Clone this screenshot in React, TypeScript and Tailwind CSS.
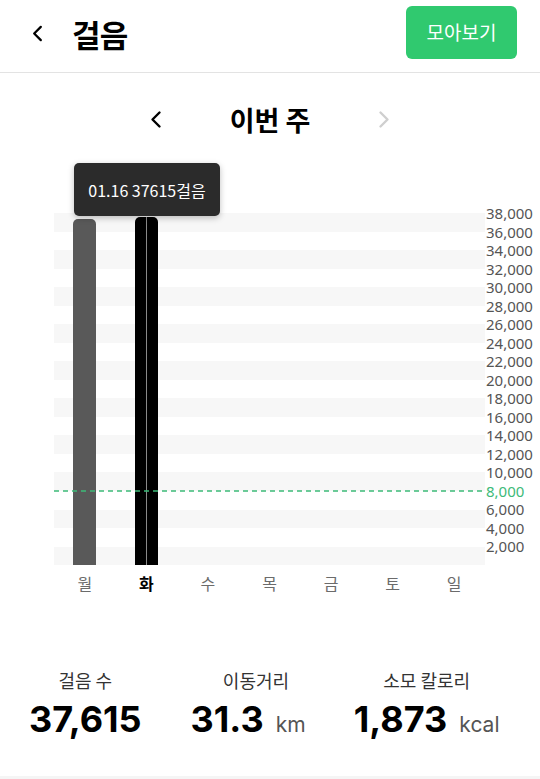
import React from 'react'

const KR = { fontFamily: '"Noto Sans CJK KR", "Noto Sans", sans-serif' }
const NUM = { fontFamily: 'Inter, "Noto Sans CJK KR", sans-serif' }

const MAX = 38000
const ticks = Array.from({ length: 19 }, (_, i) => MAX - i * 2000)
const days = [
  { d: '월', v: 37350 },
  { d: '화', v: 37615, active: true },
  { d: '수', v: 0 },
  { d: '목', v: 0 },
  { d: '금', v: 0 },
  { d: '토', v: 0 },
  { d: '일', v: 0 },
]
const GOAL = 8000

function Chevron ({ dir = 'left', className = '' }: { dir?: 'left' | 'right', className?: string }) {
  return (
    <svg viewBox="0 0 12 18" className={className} fill="none" stroke="currentColor" strokeWidth="2.4" strokeLinecap="round" strokeLinejoin="round">
      {dir === 'left' ? <path d="M9.5 2 L2.5 9 L9.5 16" /> : <path d="M2.5 2 L9.5 9 L2.5 16" />}
    </svg>
  )
}

export default function App () {
  return (
    <div className="w-[540px] h-[779px] bg-white flex flex-col text-black overflow-hidden" style={KR}>
      {/* header */}
      <header className="h-[73px] shrink-0 flex items-center justify-between border-b border-[#e3e3e3]">
        <div className="flex items-center pl-[31px] gap-[28px] mb-[6px]">
          <Chevron className="w-[13px] h-[17px] text-black" />
          <h1 className="text-[31px] font-bold leading-none tracking-tight">걸음</h1>
        </div>
        <button className="mr-[23px] mb-[7px] w-[111px] h-[53px] rounded-[6px] bg-[#30c96f] text-white text-[19px] flex items-center justify-center">
          모아보기
        </button>
      </header>

      {/* week nav */}
      <div className="h-[92px] shrink-0 flex items-center justify-center gap-[68px] pt-[1px]">
        <Chevron className="w-[12px] h-[19px] text-black" />
        <span className="text-[27px] font-bold leading-none">이번 주</span>
        <Chevron dir="right" className="w-[12px] h-[19px] text-[#cfcfcf]" />
      </div>

      {/* chart */}
      <div className="relative pt-[48px]">
        <div className="absolute left-[74px] top-[-2px] w-[146px] h-[53px] rounded-[5px] bg-[#2b2b2b] shadow-[0_2px_6px_rgba(0,0,0,0.25)] flex items-center justify-center text-white text-[16px] z-10">
          01.16 37615걸음
        </div>

        <div className="flex">
          <div className="ml-[54px] w-[431px]">
            <div className="relative h-[352px]">
              <div className="absolute inset-0 flex flex-col">
                {ticks.map((t, i) => (
                  <div key={t} className={i % 2 === 0 ? 'flex-1 bg-[#f7f7f7]' : 'flex-1'} />
                ))}
              </div>
              <div className="absolute inset-0 grid grid-cols-7 items-end">
                {days.map(x => (
                  <div key={x.d} className="flex justify-center h-full items-end">
                    {x.v > 0 && (
                      <div
                        className={x.active ? 'relative w-[23px] rounded-t-[5px] bg-black' : 'w-[23px] rounded-t-[5px] bg-[#595959]'}
                        style={{ height: `${(x.v / MAX) * 100}%` }}
                      >
                        {x.active && <div className="absolute left-[11px] top-0 bottom-0 w-px bg-[#8a8a8a]" />}
                      </div>
                    )}
                  </div>
                ))}
              </div>
              <svg className="absolute left-0 w-full h-[2px]" style={{ bottom: `calc(${(GOAL / MAX) * 100}% - 1px)` }} preserveAspectRatio="none">
                <line x1="0" y1="1" x2="100%" y2="1" stroke="#3dba78" strokeWidth="1.5" strokeDasharray="5 4" />
              </svg>
            </div>
            <div className="grid grid-cols-7 pt-[6px] text-[16px] leading-[24px] text-[#6b6b6b]">
              {days.map(x => (
                <span key={x.d} className={x.active ? 'text-center font-bold text-black' : 'text-center'}>{x.d}</span>
              ))}
            </div>
          </div>

          <div className="w-[55px] -mt-[9px] pl-[1px] flex flex-col text-[15px] text-[#555]" style={{ fontFamily: '"Noto Sans", sans-serif' }}>
            {ticks.map(t => (
              <span key={t} className={t === GOAL ? 'h-[18.53px] leading-[18.53px] text-[#3dba78]' : 'h-[18.53px] leading-[18.53px]'}>
                {t > 0 ? t.toLocaleString('en-US') : ''}
              </span>
            ))}
          </div>
        </div>
      </div>

      {/* stats */}
      <div className="mt-[72px] w-[512px] grid grid-cols-3">
        <div className="flex flex-col items-center">
          <span className="text-[18px] text-[#333] leading-[26px]">걸음 수</span>
          <span className="mt-[6px] text-[36px] font-bold leading-[40px]" style={NUM}>37,615</span>
        </div>
        <div className="flex flex-col items-center">
          <span className="text-[18px] text-[#333] leading-[26px]">이동거리</span>
          <div className="mt-[6px] flex items-baseline gap-[12px] -ml-[16px]">
            <span className="text-[36px] font-bold leading-[40px]" style={NUM}>31.3</span>
            <span className="text-[21px] text-[#555]" style={NUM}>km</span>
          </div>
        </div>
        <div className="flex flex-col items-center">
          <span className="text-[18px] text-[#333] leading-[26px]">소모 칼로리</span>
          <div className="mt-[6px] flex items-baseline gap-[12px]">
            <span className="text-[36px] font-bold leading-[40px]" style={NUM}>1,873</span>
            <span className="text-[21px] text-[#555]" style={NUM}>kcal</span>
          </div>
        </div>
      </div>

      <div className="mt-auto h-[3px] bg-[#f5f5f5]" />
    </div>
  )
}
